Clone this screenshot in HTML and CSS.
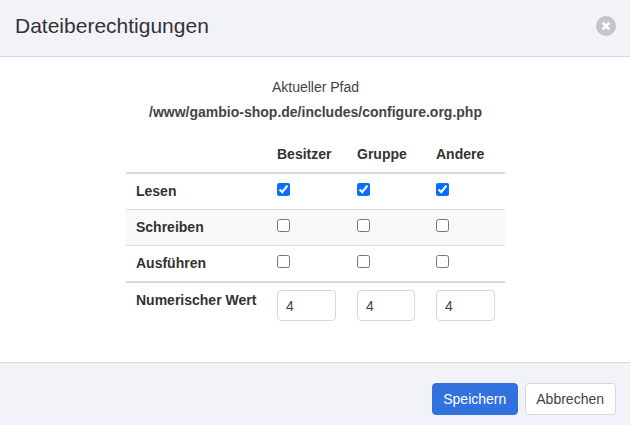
FILE: index.html
```html
<!DOCTYPE html>
<html lang="de">
<head>
<meta charset="utf-8">
<title>Dateiberechtigungen</title>
<link rel="stylesheet" href="styles.css">
</head>
<body>
<div class="modal">
  <header class="modal-header">
    <h1 class="modal-title">Dateiberechtigungen</h1>
    <button class="close" type="button" aria-label="Schließen">
      <svg viewBox="0 0 20 20" width="20" height="20"><circle cx="10" cy="10" r="10" fill="#c4c5cc"/><path d="M6.6 6.6l6.8 6.8M13.4 6.6l-6.8 6.8" stroke="#fff" stroke-width="2.6" fill="none"/></svg>
    </button>
  </header>
  <main class="modal-body">
    <p class="path-label">Aktueller Pfad</p>
    <p class="path-value">/www/gambio-shop.de/includes/configure.org.php</p>
    <table class="perm">
      <thead>
        <tr><th class="c0"></th><th class="c1">Besitzer</th><th class="c2">Gruppe</th><th class="c3">Andere</th></tr>
      </thead>
      <tbody>
        <tr><th>Lesen</th><td><input type="checkbox" checked></td><td><input type="checkbox" checked></td><td><input type="checkbox" checked></td></tr>
        <tr><th>Schreiben</th><td><input type="checkbox"></td><td><input type="checkbox"></td><td><input type="checkbox"></td></tr>
        <tr class="last"><th>Ausführen</th><td><input type="checkbox"></td><td><input type="checkbox"></td><td><input type="checkbox"></td></tr>
        <tr class="num"><th>Numerischer Wert</th><td><input class="field" type="text" value="4"></td><td><input class="field" type="text" value="4"></td><td><input class="field" type="text" value="4"></td></tr>
      </tbody>
    </table>
  </main>
  <footer class="modal-footer">
    <button class="btn primary" type="button">Speichern</button>
    <button class="btn" type="button">Abbrechen</button>
  </footer>
</div>
</body>
</html>
```
FILE: styles.css
```css
* { box-sizing: border-box; }
html, body { margin: 0; height: 100%; }
body { font-family: "Liberation Sans", Arial, sans-serif; font-size: 14px; color: #444; background: #fff; overflow: hidden; }
.modal { display: flex; flex-direction: column; width: 630px; height: 425px; }
.modal-header { flex: none; height: 57px; display: flex; align-items: center; justify-content: space-between; padding: 0 14px 5px 15px; background: #f2f3f9; border-bottom: 1px solid #d6d7dc; }
.modal-title { margin: 0; font-size: 21px; font-weight: 400; color: #333; line-height: 26px; }
.close { display: block; width: 20px; height: 20px; padding: 0; border: 0; background: none; }
.close svg { display: block; }
.modal-body { flex: 1; padding-top: 20px; }
.path-label { margin: 0; height: 25px; padding-left: 1px; line-height: 20px; text-align: center; }
.path-value { margin: 0 0 14px; padding-left: 1px; line-height: 20px; text-align: center; font-weight: 700; }
.perm { border-collapse: collapse; table-layout: fixed; width: 379px; margin-left: 126px; }
.perm th, .perm td { text-align: left; vertical-align: top; padding: 8px 10px 0; }
.perm thead th { height: 37px; padding-top: 8px; border-bottom: 2px solid #dadada; color: #333; line-height: 20px; }
.perm tbody th { padding-top: 7px; color: #333; line-height: 20px; }
.perm tbody tr { height: 36px; border-bottom: 1px solid #dedede; }
.perm tbody tr:nth-child(2) { background: #f9f9f9; }
.perm tbody tr.last { height: 37px; border-bottom: 2px solid #dadada; }
.perm tbody tr.num { border-bottom: 0; }
.perm tbody tr.num th, .perm tbody tr.num td { padding-top: 7px; }
.c0 { width: 141px; }
.c1 { width: 80px; }
.c2 { width: 79px; }
.c3 { width: 79px; }
input[type="checkbox"] { display: block; width: 13px; height: 13px; margin: 1px 0 0; accent-color: #0d6efd; }
.field { display: block; width: 59px; height: 31px; padding: 0 8px; border: 1px solid #d8d8d8; border-radius: 4px; font: 14px "Liberation Sans", Arial, sans-serif; color: #444; background: #fff; }
.perm td:nth-child(3) .field { width: 58px; }
.modal-footer { flex: none; height: 63px; display: flex; justify-content: flex-end; gap: 7px; padding: 20px 14px 10px; background: #f2f3f9; border-top: 1px solid #d6d7dc; }
.btn { height: 32px; padding: 0 11px 0 10px; border: 1px solid #d8d8d8; border-radius: 4px; font: 14px "Liberation Sans", Arial, sans-serif; color: #444; background: #fff; }
.btn.primary { background: #3272de; border-color: #3272de; color: #fff; }
```
